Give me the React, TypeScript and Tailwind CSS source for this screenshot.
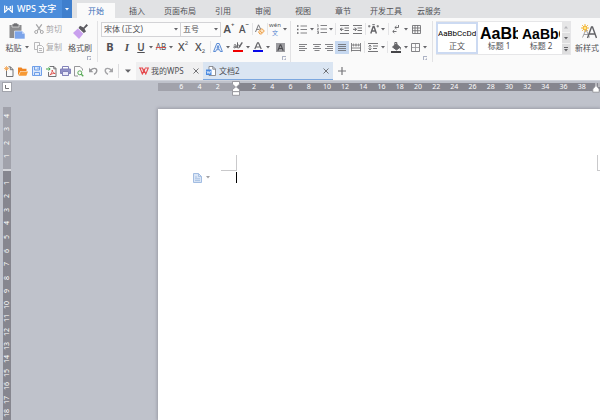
import type { ReactNode } from "react";

const MENUS = [
  { name: "插入", width: "w-10" },
  { name: "页面布局", width: "w-[46px]" },
  { name: "引用", width: "w-10" },
  { name: "审阅", width: "w-10" },
  { name: "视图", width: "w-10" },
  { name: "章节", width: "w-10" },
  { name: "开发工具", width: "w-[46px]" },
  { name: "云服务", width: "w-10" },
];

const H_BEFORE = [6, 4, 2];
const H_AFTER = Array.from({ length: 19 }, (_, i) => (i + 1) * 2);
const V_BEFORE = [4, 3, 2, 1];
const V_AFTER = Array.from({ length: 18 }, (_, i) => i + 1);

const INK = "#646468";

function Icon({ w, h, children }: { w: number; h: number; children: ReactNode }) {
  return (
    <svg width={w} height={h} viewBox={`0 0 ${w} ${h}`} fill="none" stroke={INK} className="block shrink-0" aria-hidden="true">
      {children}
    </svg>
  );
}

function Arrow({ color = INK }: { color?: string }) {
  return (
    <Icon w={4} h={3}>
      <path d="M0 0h4L2 2.6z" fill={color} stroke="none" />
    </Icon>
  );
}

function Tool({ label, className, children }: { label: string; className: string; children: ReactNode }) {
  return (
    <button aria-label={label} className={`flex h-full shrink-0 items-center justify-center ${className}`}>
      {children}
    </button>
  );
}

function Caret({ label, narrow }: { label: string; narrow?: boolean }) {
  return (
    <Tool label={label} className={narrow ? "w-1.5" : "w-2"}>
      <Arrow />
    </Tool>
  );
}

function Sep() {
  return (
    <span className="flex w-[3px] shrink-0 justify-center">
      <span className="h-3 w-px bg-[#e4e4e6]" />
    </span>
  );
}

function Launcher({ label }: { label: string }) {
  return (
    <button aria-label={label} className="block">
      <Icon w={4} h={4}>
        <path d="M.4 4V.4H4" stroke="#8c94ae" strokeWidth=".8" />
        <path d="M1.8 4H4V1.8" stroke="#8c94ae" strokeWidth=".9" />
      </Icon>
    </button>
  );
}

function Lines({ kind }: { kind: "left" | "center" | "right" | "justify" }) {
  const d = {
    left: "M0 .5h8M0 2.5h6M0 4.5h8M0 6.5h6",
    center: "M0 .5h8M1.5 2.5h5M0 4.5h8M1.5 6.5h5",
    right: "M0 .5h8M2 2.5h6M0 4.5h8M2 6.5h6",
    justify: "M0 .5h8M0 2.5h8M0 4.5h8M0 6.5h8",
  }[kind];
  return (
    <Icon w={8} h={7}>
      <path d={d} strokeWidth=".8" />
    </Icon>
  );
}

function MenuBar() {
  return (
    <nav className="flex h-[18px] shrink-0 items-end bg-[#e1e2e4]">
      <button className="flex h-full w-[62px] shrink-0 items-center gap-1 bg-[#4b8ddb] pl-1 text-[9px] font-medium text-white">
        <Icon w={9} h={8}>
          <path d="M.7.5v6.8L4.5 3.6l3.8 3.7V.5M2.7 1v3M6.3 1v3" stroke="#fff" strokeWidth="1.2" />
        </Icon>
        WPS 文字
      </button>
      <button aria-label="主菜单" className="flex h-full w-2.5 shrink-0 items-center justify-center bg-[#3f7fcd]">
        <Arrow color="#fff" />
      </button>
      <button className="ml-[5px] mr-0.5 h-[15px] w-[38px] shrink-0 bg-[#fafafa] text-[#3a6fb8]">开始</button>
      {MENUS.map((m) => (
        <button key={m.name} className={`h-[15px] shrink-0 ${m.width}`}>
          {m.name}
        </button>
      ))}
    </nav>
  );
}

function Clipboard() {
  return (
    <section className="flex w-[98px] shrink-0 flex-col border-r border-[#e2e2e4]">
      <div className="flex">
        <button className="flex w-[34px] flex-col items-center">
          <span className="flex h-[18px] items-end">
            <Icon w={16} h={16}>
              <path d="M.5 2h12v13H.5z" fill="#8c8c8e" stroke="none" />
              <path d="M3 1h1.5V0h4v1H10v3H3z" fill="#6f6f72" stroke="#fafafa" strokeWidth=".6" />
              <path d="M5.5 8h7.5l3 3v5H5.5z" fill="#7ba4ea" stroke="#fafafa" strokeWidth=".6" />
              <path d="M13 8v3h3" fill="#b5ccf5" stroke="none" />
            </Icon>
          </span>
          <span className="flex h-[17px] items-center gap-[3px]">
            粘贴
            <Arrow />
          </span>
        </button>
        <div className="flex w-[31px] flex-col text-[#a6a6a8]">
          <button className="flex h-4 items-center gap-0.5">
            <Icon w={10} h={10}>
              <g stroke="#a6a6a8">
                <path d="M2.2.3l4.5 6.4M7.8.3L3.3 6.7" strokeWidth="1.2" />
                <circle cx="2.2" cy="8" r="1.5" />
                <circle cx="7.8" cy="8" r="1.5" />
              </g>
            </Icon>
            <span className="shrink-0">剪切</span>
          </button>
          <button className="mt-px flex h-[18px] items-center gap-0.5">
            <Icon w={10} h={11}>
              <path d="M3 7.5H.5v-7h5V3M3.5 3.5h4l2 2v5h-6zM5 6.5h3M5 8.5h3" stroke="#b0b0b2" strokeWidth=".9" />
            </Icon>
            <span className="shrink-0">复制</span>
          </button>
        </div>
        <button className="flex w-[30px] flex-col items-center">
          <span className="flex h-[18px] items-end">
            <Icon w={15} h={15}>
              <path d="M10.5 3.6L13.5 0 15 1.5l-3.5 3.2L13 7.5 10.8 9 5.5 4 7 1.8z" fill="#5b5a60" stroke="none" />
              <path d="M4.9 4.6l5.4 5.2L6 15 0 9z" fill="#c9a0ee" stroke="none" />
            </Icon>
          </span>
          <span className="flex h-[17px] items-center">格式刷</span>
        </button>
      </div>
      <div className="mr-1.5 flex justify-end">
        <Launcher label="剪贴板" />
      </div>
    </section>
  );
}

function Combo({ label, value, className }: { label: string; value: string; className: string }) {
  return (
    <span className={`relative flex h-[15px] shrink-0 items-center border border-[#d3d3d6] bg-[#fcfcfc] ${className}`}>
      <select aria-label={label} className="h-full w-full appearance-none pl-0.5 leading-3 outline-none">
        <option>{value}</option>
      </select>
      <span className="pointer-events-none absolute right-0.5">
        <Arrow />
      </span>
    </span>
  );
}

function FontGroup() {
  return (
    <section className="flex w-[193px] shrink-0 flex-col border-r border-[#e2e2e4] pl-[3px]">
      <div className="flex h-4 items-center">
        <Combo label="字体" value="宋体 (正文)" className="w-20" />
        <Combo label="字号" value="五号" className="-ml-px w-[41px]" />
        <Tool label="增大字号" className="w-4">
          <span className="text-[11px] font-semibold">A</span>
          <span className="self-start text-[6px] leading-2 font-bold">+</span>
        </Tool>
        <Tool label="减小字号" className="w-3.5">
          <span className="text-[10px] font-medium">A</span>
          <span className="self-start text-[6px] leading-2 font-bold">−</span>
        </Tool>
        <Sep />
        <Tool label="清除格式" className="w-3">
          <Icon w={10} h={11}>
            <path d="M.5 8L3.5.8 6 6M1.6 5.4h3" stroke="#77777b" />
            <path d="M3.5 7.8l3.3-3.2 2.6 2.4L6.3 10H4.8z" fill="#fbe3c4" stroke="#eda04a" />
            <path d="M4.8 6.7l2.4 2.4" stroke="#eda04a" />
          </Icon>
        </Tool>
        <Sep />
        <Tool label="拼音指南" className="w-3">
          <span className="flex flex-col items-center">
            <span className="text-[6px] leading-[7px]">wén</span>
            <span className="text-[6px] leading-[8px] text-[#4f83cf]">文</span>
          </span>
        </Tool>
        <Caret label="拼音选项" />
      </div>
      <div className="mt-px flex h-[18px] items-center">
        <Tool label="加粗" className="w-[18px] text-[11px] font-bold">B</Tool>
        <Tool label="倾斜" className="w-4 font-['Liberation_Serif',serif] text-[11px] font-bold italic">I</Tool>
        <Tool label="下划线" className="w-3 text-[10px] font-semibold underline">U</Tool>
        <Caret label="下划线样式" />
        <Tool label="删除线" className="w-3 text-[8px] line-through decoration-[#d8504c]">AB</Tool>
        <Caret label="删除线样式" />
        <Tool label="上标" className="w-4">
          <span className="text-[11px] font-medium">X</span>
          <span className="self-start text-[6px] leading-[10px]">2</span>
        </Tool>
        <Tool label="下标" className="w-[18px]">
          <span className="text-[11px] font-medium">X</span>
          <span className="self-end text-[6px] leading-[10px]">2</span>
        </Tool>
        <Sep />
        <Tool label="文字效果" className="w-3">
          <Icon w={10} h={9}>
            <path d="M.6 8.5L3.8.5h2.4l3.2 8H7.3l-.7-1.8H3.4l-.7 1.8zM5 2.5L4 5.2h2z" stroke="#4a7fd0" strokeWidth=".9" fill="#eef4fd" />
          </Icon>
        </Tool>
        <Caret label="文字效果样式" />
        <Tool label="突出显示" className="w-3">
          <Icon w={10} h={10}>
            <path d="M.8 3.200c1.500-1 2.400-.4 2.400.6v2.200M3.200 4.200C1.500 4.200.6 4.500.7 5.200c.1.900 1.500.9 2.500-.2M4.500.300v5.500c1.500.3 2.400-.3 2.400-1.400S5.800 2.700 4.600 3.400" />
            <path d="M6.200 5.200L9.300.4" strokeWidth="1.4" />
            <path d="M0 9h10" stroke="#f00000" strokeWidth="2" />
          </Icon>
        </Tool>
        <Caret label="突出显示颜色" />
        <Tool label="字体颜色" className="w-3">
          <Icon w={10} h={10}>
            <path d="M1.8 7L4.5.8h1L8.2 7M3 5h4" strokeWidth="1.2" />
            <path d="M0 9h10" stroke="#0808e8" strokeWidth="2" />
          </Icon>
        </Tool>
        <Caret label="字体颜色选项" />
        <Tool label="字符底纹" className="w-4">
          <Icon w={9} h={9}>
            <path d="M0 0h9v9H0z" fill="#9b9b9f" stroke="none" />
            <path d="M1.8 7.800l2.400-6h.6l2.400 6M2.800 5.500h3.400" stroke="#4c4c50" strokeWidth="1.100" />
          </Icon>
        </Tool>
      </div>
      <div className="mr-1 flex justify-end">
        <Launcher label="字体设置" />
      </div>
    </section>
  );
}

function ParagraphGroup() {
  return (
    <section className="flex w-[142px] shrink-0 flex-col border-r border-[#e2e2e4] pl-1">
      <div className="flex h-4 items-center">
        <Tool label="项目符号" className="w-3.5">
          <Icon w={10} h={9}>
            <path d="M0 1h1.500M0 4.500h1.500M0 8h1.500" strokeWidth="1.500" />
            <path d="M3.500 1H10M3.500 4.500H10M3.500 8H10" strokeWidth=".8" />
          </Icon>
        </Tool>
        <Caret label="项目符号样式" narrow />
        <Tool label="编号" className="w-[13px]">
          <Icon w={10} h={10}>
            <path d="M.3.700H1V3M.2 4.300h1.400L.3 6h1.400M.2 7.500h1.300v2H.2M.6 8.500h.9" strokeWidth=".7" />
            <path d="M3.500 1.500H10M3.500 5H10M3.500 8.500H10" strokeWidth=".8" />
          </Icon>
        </Tool>
        <Caret label="编号样式" narrow />
        <Sep />
        <Tool label="减少缩进" className="w-3.5">
          <Icon w={9} h={9}>
            <path d="M0 .5h9M4.500 3h4.500M4.500 5.500h4.500M0 8.500h9" strokeWidth=".9" />
            <path d="M0 4.300h3.500M1.800 2.600L.3 4.300l1.500 1.700" />
          </Icon>
        </Tool>
        <Tool label="增加缩进" className="w-[13px]">
          <Icon w={9} h={9}>
            <path d="M0 .5h9M4.500 3h4.500M4.500 5.500h4.500M0 8.500h9" strokeWidth=".9" />
            <path d="M0 4.300h3.500M1.900 2.600l1.500 1.700-1.500 1.700" />
          </Icon>
        </Tool>
        <Sep />
        <Tool label="中文版式" className="w-3">
          <Icon w={11} h={10}>
            <path d="M2.800 9.500l2.400-7h.8l2.400 7M3.700 7h3.600" strokeWidth="1.400" />
            <path d="M0 2.200h2.500M1.200 1v2.500M8.500 2.200H11M9.800 1v2.500M4.300.5h2.500" strokeWidth=".8" />
          </Icon>
        </Tool>
        <Caret label="中文版式选项" />
        <Sep />
        <Tool label="显示段落标记" className="w-3">
          <Icon w={8} h={9}>
            <path d="M6.500 0v2.500H3M4.500 1L2.800 2.500 4.500 4M4.500 6.500H1M2.300 5L.7 6.500 2.300 8" strokeWidth=".9" />
          </Icon>
        </Tool>
        <Caret label="段落标记选项" />
        <Tool label="插入表格" className="w-3">
          <Icon w={9} h={9}>
            <path d="M.5.5h8v8h-8zM.5 3h8M.5 5.700h8M3 .5v8M5.700.5v8" strokeWidth=".8" />
          </Icon>
        </Tool>
      </div>
      <div className="mt-px flex h-[18px] items-center">
        <Tool label="左对齐" className="w-4"><Lines kind="left" /></Tool>
        <Tool label="居中" className="w-3"><Lines kind="center" /></Tool>
        <Tool label="右对齐" className="w-3"><Lines kind="right" /></Tool>
        <span className="flex h-[13px]">
          <Tool label="两端对齐" className="w-3.5 bg-[#c6d8f0]"><Lines kind="justify" /></Tool>
        </span>
        <Tool label="分散对齐" className="w-3.5">
          <Icon w={10} h={9}>
            <path d="M.5 0v8.500M9.500 0v8.500M.5 5h9M.5 7.500h9" strokeWidth=".8" />
            <path d="M1.500 2h7M3 .7L1.600 2 3 3.300M7 .7L8.400 2 7 3.300M5 .5v3" strokeWidth=".8" />
          </Icon>
        </Tool>
        <Sep />
        <Tool label="行距" className="w-3.5">
          <Icon w={10} h={9}>
            <path d="M0 .5h10M5 3h5M5 5.500h4M0 8.500h10" strokeWidth=".9" />
            <path d="M2 2v5M.5 3.500L2 2l1.500 1.500M.5 5.500L2 7l1.500-1.500" strokeWidth=".8" />
          </Icon>
        </Tool>
        <Caret label="行距选项" narrow />
        <Sep />
        <Tool label="底纹颜色" className="w-3.5">
          <Icon w={10} h={11}>
            <path d="M1.500 5L5.200 1.800 9 5.200 5.500 8z" fill={INK} />
            <path d="M3.800 3.500V.5h2v2.500M9.300 5v2.500" />
            <path d="M0 10h10" strokeWidth="2" stroke="#454548" />
          </Icon>
        </Tool>
        <Caret label="底纹选项" narrow />
        <Tool label="边框" className="w-3">
          <Icon w={9} h={9}>
            <path d="M.5.5h8v8h-8z" strokeWidth=".8" />
            <path d="M4.500 1v7M1 4.500h7" strokeWidth=".8" stroke="#909094" />
          </Icon>
        </Tool>
        <Caret label="边框选项" />
      </div>
      <div className="mr-[5px] flex justify-end">
        <Launcher label="段落设置" />
      </div>
    </section>
  );
}

function StyleCard({ sample, name, active }: { sample: ReactNode; name: string; active?: boolean }) {
  return (
    <button
      className={`flex w-[42px] shrink-0 flex-col overflow-hidden border-2 bg-white ${
        active ? "border-[#ccdaf2]" : "border-white"
      }`}
    >
      <span className="flex h-[18px] w-full items-center overflow-hidden pt-[3px] text-black">{sample}</span>
      <span className="h-3 w-full text-center leading-3">{name}</span>
    </button>
  );
}

function Styles() {
  return (
    <section className="flex min-w-0 flex-1 items-start gap-1 pl-[3px]">
      <div className="flex h-[34px] shrink-0 border-y border-r border-[#e6e6e8] bg-white">
        <StyleCard active name="正文" sample={<span className="mx-auto font-[Roboto,sans-serif] text-[8px]">AaBbCcDd</span>} />
        <StyleCard name="标题 1" sample={<span className="font-['Liberation_Sans',sans-serif] text-[16px] font-bold">AaBb</span>} />
        <StyleCard name="标题 2" sample={<span className="font-['Liberation_Sans',sans-serif] text-[14px] font-bold">AaBbC</span>} />
        <div className="flex w-2 flex-col gap-px bg-[#f2f2f2]">
          <button aria-label="上一行" className="flex flex-1 items-center justify-center bg-[#e6e6e7]">
            <Icon w={4} h={3}>
              <path d="M0 2.600h4L2 0z" fill="#b4b4b8" stroke="none" />
            </Icon>
          </button>
          <button aria-label="下一行" className="flex flex-1 items-center justify-center bg-[#dededf]">
            <Arrow />
          </button>
          <button aria-label="更多样式" className="flex flex-1 items-center justify-center bg-[#dededf]">
            <Icon w={4} h={5}>
              <path d="M0 .5h4" />
              <path d="M0 2h4L2 4.600z" fill={INK} stroke="none" />
            </Icon>
          </button>
        </div>
      </div>
      <button className="flex shrink-0 flex-col items-center">
        <span className="flex h-[18px] items-end pl-1">
          <Icon w={16} h={15}>
            <path d="M1.500 13.500L5 5.500l3.500 8M3 10.500h4" stroke="#a0a0a4" />
            <path d="M6.500 14l4-11h1l4 11M8.300 10h5.400" stroke="#626266" strokeWidth="1.400" />
            <path d="M4 0v8M0 4h8M1.200 1.200l5.600 5.600M6.800 1.200L1.200 6.800" stroke="#f3b63c" />
            <circle cx="4" cy="4" r="1.800" fill="#ffe98a" stroke="#f3b63c" />
          </Icon>
        </span>
        <span className="h-[17px] leading-[17px]">新样式</span>
      </button>
    </section>
  );
}

function Close() {
  return (
    <Icon w={6} h={6}>
      <path d="M.5.5l5 5M5.500.5l-5 5" strokeWidth=".9" />
    </Icon>
  );
}

function QuickBar() {
  return (
    <div className="flex h-[18px] shrink-0 items-stretch bg-[#fafafa] pl-0.5">
      <Tool label="新建" className="w-3.5">
        <Icon w={10} h={11}>
          <path d="M2.500 3v7.500h6.500v-7L6.500.8H4.500M6.300 1v2.700H9" strokeWidth=".9" fill="none" />
          <path d="M2.500 0v5M0 2.500h5M.8.8l3.400 3.400M4.200.8L.8 4.200" stroke="#f5a653" strokeWidth=".8" />
        </Icon>
      </Tool>
      <Tool label="打开" className="w-3.5">
        <Icon w={10} h={9}>
          <path d="M0 8.500V.5h3.500l1 1.200h4V4H2.500z" fill="#ef8523" stroke="none" />
          <path d="M2.700 4.400H10L8.300 8.700H.7z" fill="#f79a35" stroke="none" />
        </Icon>
      </Tool>
      <Tool label="保存" className="w-3.5">
        <Icon w={10} h={10}>
          <path d="M.5.5h8l1 1v8h-9z" stroke="#6f9fe8" fill="#dce9fc" />
          <path d="M2.500.5V4h5V.5M2.500 9.500v-3h5v3M6 1.500v1.500" stroke="#6f9fe8" />
        </Icon>
      </Tool>
      <Tool label="输出为PDF" className="w-3.5">
        <Icon w={11} h={11}>
          <path d="M2.500 6v4.500h7.500v-8L8 .5H3.500M7.800.7v2.100H10" strokeWidth=".9" />
          <path d="M0 3h4M2.500 1.500L4.200 3 2.500 4.600" stroke="#3ea348" />
          <path d="M3.800 9c1.500-.8 2.500-3 2.400-5 .4 2.300 1.400 3.300 3 3.500-2-.2-3.600.3-5.400 1.500z" stroke="#dc4a44" strokeWidth=".9" />
        </Icon>
      </Tool>
      <Tool label="打印" className="w-3.5">
        <Icon w={11} h={10}>
          <path d="M2.500 3V.5h6V3M2.500 7v2.500h6V7" stroke="#8282b8" fill="#fff" />
          <path d="M.5 3h10v4.500H.5z" fill="#8f8fc8" stroke="#8282b8" />
          <path d="M2.500 5.500h6v4h-6z" fill="#e9e9f8" stroke="#8282b8" />
        </Icon>
      </Tool>
      <Tool label="打印预览" className="w-3.5">
        <Icon w={10} h={11}>
          <path d="M4 10H.5V.5H6L8.500 3v1.500" stroke="#8b8b8f" strokeWidth=".9" />
          <circle cx="5.800" cy="6.800" r="2" stroke="#55a854" />
          <path d="M7.300 8.300l2 2" stroke="#55a854" strokeWidth="1.300" />
        </Icon>
      </Tool>
      <Tool label="撤销" className="w-[15px]">
        <Icon w={9} h={8}>
          <path d="M1.500 3.500C4 .5 7.800.8 7.800 3.500c0 2-1.200 3-2.800 3.800" stroke="#98989b" strokeWidth="1.400" />
          <path d="M0 .8v4.400h4.400z" fill="#98989b" stroke="none" />
        </Icon>
      </Tool>
      <Tool label="恢复" className="w-[15px]">
        <Icon w={9} h={8}>
          <path d="M7.500 3.500C5 .5 1.200.8 1.200 3.500c0 2 1.200 3 2.800 3.800" stroke="#a4a4a7" strokeWidth="1.400" />
          <path d="M9 .8v4.400H4.600z" fill="#a4a4a7" stroke="none" />
        </Icon>
      </Tool>
      <span className="ml-0.5 w-px self-center bg-[#dcdcde] h-3.5" />
      <Tool label="自定义快速访问" className="w-[17px]">
        <Icon w={6} h={4}>
          <path d="M0 .5h6L3 3.800z" fill={INK} stroke="none" />
        </Icon>
      </Tool>
      <div className="flex w-[67px] shrink-0 items-center bg-[#efeff0] pl-[3px] pr-1">
        <button className="flex flex-1 items-center gap-0.5 whitespace-nowrap">
          <Icon w={10} h={8}>
            <path d="M0 1h3.500l1.300 4L6 1.500M1 1l2.300 6L5 3l1.800 4L9.300 1H6" stroke="#e5484d" strokeWidth="1.100" />
          </Icon>
          我的WPS
        </button>
        <button aria-label="关闭我的WPS"><Close /></button>
      </div>
      <div className="flex w-[130px] shrink-0 items-center border-b border-[#7ba7df] bg-[#dae5f2] pl-[3px] pr-1">
        <button className="flex flex-1 items-center gap-[3px]">
          <Icon w={10} h={10}>
            <path d="M3 .5h4l2.500 2.500v6.500H3zM6.800.5v2.700h2.700" fill="#fff" stroke="#77777c" strokeWidth=".8" />
            <path d="M0 3.500h5.500V9H0z" fill="#4a8ae0" stroke="none" />
            <path d="M1 5l.9 2.500.9-2 .9 2L4.600 5" stroke="#fff" strokeWidth=".7" />
          </Icon>
          文档2
        </button>
        <button aria-label="关闭文档2"><Close /></button>
      </div>
      <Tool label="新建标签" className="w-[18px]">
        <Icon w={8} h={8}>
          <path d="M4 0v8M0 4h8" stroke="#77777b" strokeWidth="1.200" />
        </Icon>
      </Tool>
    </div>
  );
}

function TopRuler() {
  return (
    <div className="flex h-[27px] shrink-0 items-start border-t border-[#cfd2da] pt-px">
      <button aria-label="制表符" className="ml-0.5 flex size-2.5 shrink-0 items-center justify-center border border-[#a2a4ac] bg-white">
        <Icon w={4} h={4}>
          <path d="M.5 0v3.500H4" strokeWidth=".9" />
        </Icon>
      </button>
      <div className="relative ml-[146px] mt-px flex h-2 min-w-0 flex-1 text-center text-[7px] leading-2 text-white">
        <div className="flex w-[78px] shrink-0 bg-[#a1a2ab] pl-3.5 pr-[9px]">
          {H_BEFORE.map((n) => (
            <span key={n} className="flex-1">{n}</span>
          ))}
        </div>
        <div className="min-w-0 flex-1 overflow-hidden bg-[#86868f] pl-[9px]">
          <div className="flex w-[346px]">
            {H_AFTER.map((n) => (
              <span key={n} className="flex-1">{n}</span>
            ))}
          </div>
        </div>
        <span className="absolute -top-0.5 left-[74px]">
          <Icon w={8} h={15}>
            <path d="M.5.5h7v2.700L4.500 6l3 2.500v2.200h-7V8.500L3.500 6l-3-2.800z" fill="#fff" stroke="#8a8a90" strokeWidth=".8" />
            <path d="M.5 10.700h7v3.600h-7z" fill="#fff" stroke="#8a8a90" strokeWidth=".8" />
          </Icon>
        </span>
        <span className="absolute right-0 top-0">
          <Icon w={8} h={10}>
            <path d="M4 2.500L.8 6v3.200h6.400V6z" fill="#fff" stroke="#8a8a90" strokeWidth=".8" />
            <path d="M4 0v4M7 0v4" stroke="#e8e8ea" />
          </Icon>
        </span>
      </div>
    </div>
  );
}

function SideRuler() {
  return (
    <div className="ml-[3px] flex w-2 shrink-0 flex-col overflow-hidden text-center text-[7px] leading-2 text-white">
      <div className="flex h-[62px] shrink-0 flex-col bg-[#a1a2ab] pb-1.5 pt-0.5">
        {V_BEFORE.map((n) => (
          <span key={n} className="flex flex-1 items-center justify-center">
            <span className="-rotate-90">{n}</span>
          </span>
        ))}
      </div>
      <div className="min-h-0 flex-1 overflow-hidden border-t-2 border-[#d4d5da] bg-[#86868f] pt-[5px]">
        <div className="flex h-[244px] flex-col">
          {V_AFTER.map((n) => (
            <span key={n} className="flex flex-1 items-center justify-center">
              <span className="-rotate-90">{n}</span>
            </span>
          ))}
        </div>
      </div>
    </div>
  );
}

function Page() {
  return (
    <main className="ml-[147px] mt-0.5 min-w-0 flex-1 bg-white pt-[46px] shadow-[0_0_3px_1px_#9a9ca6]">
      <div className="flex justify-between pl-[63px]">
        <span className="size-4 border-b border-r border-[#c9c9cb]" />
        <span className="h-4 w-[3px] border-b border-l border-[#c9c9cb]" />
      </div>
      <div className="mt-px flex items-center pl-[35px]">
        <button aria-label="粘贴选项" className="flex w-[43px] items-center gap-1">
          <Icon w={9} h={10}>
            <path d="M.5.5h5l3 3v6h-8z" fill="#dbe6f6" stroke="#a3bde2" />
            <path d="M5.500.5v3h3M2 4h2M2 5.800h5M2 7.600h5" stroke="#a3bde2" strokeWidth=".9" />
          </Icon>
          <Arrow color="#a0a0a4" />
        </button>
        <span className="h-[11px] w-px bg-black" />
      </div>
    </main>
  );
}

export default function App() {
  return (
    <div className="flex h-screen flex-col overflow-hidden bg-[#bfc2cb] font-['Noto_Sans','Noto_Sans_CJK_SC',sans-serif] text-[8px] leading-3 text-[#505054]">
      <MenuBar />
      <div className="flex h-11 shrink-0 bg-[#fafafa] pt-[3px]">
        <Clipboard />
        <FontGroup />
        <ParagraphGroup />
        <Styles />
      </div>
      <QuickBar />
      <TopRuler />
      <div className="flex min-h-0 flex-1">
        <SideRuler />
        <Page />
      </div>
    </div>
  );
}
